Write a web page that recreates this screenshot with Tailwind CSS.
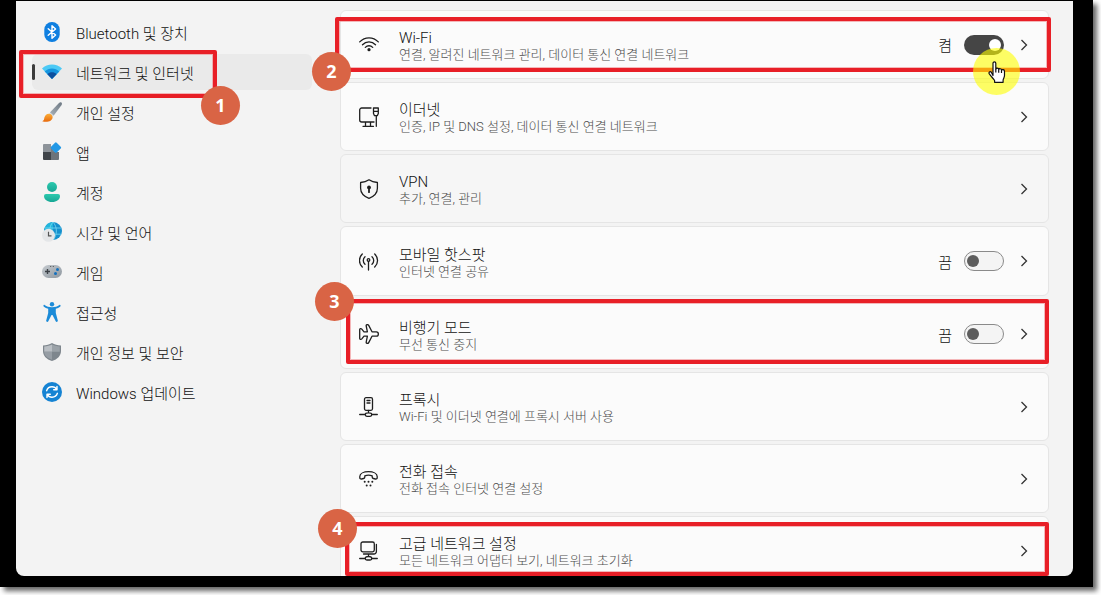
<!DOCTYPE html>
<html lang="ko">
<head>
    <meta charset="UTF-8">
    <title>네트워크 및 인터넷</title>
    <script src="https://cdn.jsdelivr.net/npm/@tailwindcss/browser@4"></script>
</head>
<body class="h-screen overflow-hidden bg-white pr-2 pb-2 font-['Roboto','Noto_Sans_CJK_KR',sans-serif] text-[15px] font-light text-[#111]">
    <div class="h-full bg-black pt-px pr-5 pb-[11px] pl-4 shadow-[4px_4px_5px_rgba(0,0,0,0.6)]">
        <div class="flex h-full overflow-hidden rounded-b-lg bg-[#f3f3f3]">

            <!-- Sidebar -->
            <nav class="flex w-[296px] shrink-0 flex-col gap-1 pt-[13px] pl-4">
                <a href="#" class="flex h-9 shrink-0 items-center gap-[14px] rounded-md pl-[10px]">
                    <svg class="size-5" viewBox="0 0 20 20" fill="none">
                        <rect x="2.3" y="0" width="15.4" height="20" rx="7.5" fill="#0f7fe0"/>
                        <path d="M6.2 6.800l7.400 6.200-3.600 3.200V3.800l3.600 3.200-7.400 6.200" stroke="#fff" stroke-width="1.4" stroke-linejoin="round" stroke-linecap="round"/>
                    </svg>
                    <span class="pt-1">Bluetooth 및 장치</span>
                </a>
                <div class="relative shrink-0">
                    <a href="#" aria-current="page" class="flex h-9 items-center rounded-md bg-[#eaeaea]">
                        <span class="h-4 w-[3px] rounded-full bg-[#3b3b3b]"></span>
                        <svg class="mr-[14px] ml-[7px] size-5" viewBox="0 0 20 20">
                            <path d="M0 6.600C5.400 1.200 14.600 1.200 20 6.600L10 17z" fill="#4cc9f5"/>
                            <path d="M2.700 9.500C6.700 5.400 13.300 5.400 17.300 9.500L10 17z" fill="#1594de"/>
                            <path d="M5.400 12.200C8 9.700 12 9.700 14.600 12.200L10 17z" fill="#0d4f9e"/>
                        </svg>
                        <span class="pt-1">네트워크 및 인터넷</span>
                    </a>
                    <div class="absolute -top-1 -left-[13px] h-12 w-[198px] rounded-xs border-4 border-[#e81f27] ring-1 ring-[#f08a8e]/60 ring-inset"></div>
                    <div class="absolute top-8 left-[169px] flex size-[39px] items-center justify-center rounded-full bg-[#d96445] pb-0.5 font-['Open_Sans',sans-serif] text-lg font-bold text-white">1</div>
                </div>
                <a href="#" class="flex h-9 shrink-0 items-center gap-[14px] rounded-md pl-[10px]">
                    <svg class="size-5" viewBox="0 0 20 20">
                        <defs>
                            <linearGradient id="brush" x1="1" y1="0" x2="0" y2="1"><stop stop-color="#6d7883"/><stop offset="1" stop-color="#a9b2ba"/></linearGradient>
                            <linearGradient id="paint" x1="0" y1="0" x2="0" y2="1"><stop stop-color="#fbb03b"/><stop offset="1" stop-color="#e8690b"/></linearGradient>
                        </defs>
                        <path d="M19.400.5c.9.8.6 1.900 0 2.800l-7.800 10.400-3.700-3.200L17 .9c.7-.7 1.700-1 2.400-.4z" fill="url(#brush)"/>
                        <path d="M8.100 10.600l3.500 3.100-1.200 1.200-3.400-3z" fill="#d5dbe0"/>
                        <path d="M6.800 11.700c1.900-.2 4 1.700 3.800 3.700-.3 3.400-5 5.300-10.400 3.800 2.100-.9 1.700-2.200 2.200-3.800.7-2.200 2.300-3.500 4.400-3.700z" fill="url(#paint)"/>
                    </svg>
                    <span class="pt-1">개인 설정</span>
                </a>
                <a href="#" class="flex h-9 shrink-0 items-center gap-[14px] rounded-md pl-[10px]">
                    <svg class="size-5" viewBox="0 0 20 20">
                        <path d="M2 2h7v8H1V3a1 1 0 011-1z" fill="#8d9399"/>
                        <path d="M1 10h8v8H2a1 1 0 01-1-1z" fill="#3f4449"/>
                        <path d="M9 10h8v7a1 1 0 01-1 1H9z" fill="#6d7379"/>
                        <path d="M9 5l4 5H9z" fill="#777d83"/>
                        <path d="M13 .8a1.200 1.200 0 011.700 0l4 4a1.200 1.200 0 010 1.700l-4 4a1.200 1.200 0 01-1.700 0l-4-4a1.200 1.200 0 010-1.700z" fill="#2298e6"/>
                    </svg>
                    <span class="pt-1">앱</span>
                </a>
                <a href="#" class="flex h-9 shrink-0 items-center gap-[14px] rounded-md pl-[10px]">
                    <svg class="size-5" viewBox="0 0 20 20">
                        <defs><linearGradient id="user" x1="0" y1="0" x2="0" y2="1"><stop stop-color="#2cc9ae"/><stop offset="1" stop-color="#17a795"/></linearGradient></defs>
                        <circle cx="10" cy="5" r="5" fill="url(#user)"/>
                        <path d="M4 12h12a2 2 0 012 2c0 3.600-3.400 6-8 6s-8-2.400-8-6a2 2 0 012-2z" fill="url(#user)"/>
                    </svg>
                    <span class="pt-1">계정</span>
                </a>
                <a href="#" class="flex h-9 shrink-0 items-center gap-[14px] rounded-md pl-[10px]">
                    <svg class="size-5" viewBox="0 0 20 20" fill="none">
                        <circle cx="11" cy="9" r="9" fill="#1590cd"/>
                        <path d="M3 5.500A9 9 0 0111 0v9H2.200z" fill="#22b6dc"/>
                        <path d="M2.800 6h16.400M2.800 12.200h16.400M11 0C6.500 5 6.500 13 11 18M11 0c4.500 5 4.500 13 0 18" stroke="#77d9f3" stroke-width=".8"/>
                        <circle cx="6.500" cy="13.300" r="6.500" fill="#e4e6e8"/>
                        <path d="M6.500 9.800v4h3" stroke="#555" stroke-width="1.200"/>
                    </svg>
                    <span class="pt-1">시간 및 언어</span>
                </a>
                <a href="#" class="flex h-9 shrink-0 items-center gap-[14px] rounded-md pl-[10px]">
                    <svg class="size-5" viewBox="0 0 20 20" fill="none">
                        <defs><linearGradient id="pad" x1="0" y1="0" x2="1" y2="1"><stop stop-color="#c5cacf"/><stop offset="1" stop-color="#8e979f"/></linearGradient></defs>
                        <rect x="0" y="3" width="20" height="13" rx="6.500" fill="url(#pad)"/>
                        <path d="M5.500 7v5M3 9.500h5" stroke="#3b4046" stroke-width="1.400"/>
                        <circle cx="15.500" cy="7.500" r="1.500" fill="#1470bd"/>
                        <circle cx="13.500" cy="11.500" r="1.500" fill="#1470bd"/>
                        <circle cx="8.700" cy="4.500" r=".6" fill="#444"/>
                        <circle cx="11.300" cy="4.500" r=".6" fill="#444"/>
                    </svg>
                    <span class="pt-1">게임</span>
                </a>
                <a href="#" class="flex h-9 shrink-0 items-center gap-[14px] rounded-md pl-[10px]">
                    <svg class="size-5" viewBox="0 0 20 20">
                        <circle cx="10" cy="2.200" r="2.200" fill="#1b8bd8"/>
                        <path d="M2.600 3c2 1.500 4.500 2.200 7.400 2.200S15.400 4.500 17.400 3c1-.6 1.700.9.700 1.700-1.200.9-2.700 1.600-4.300 2v4.200l2 7.700c.3 1.300-1.600 1.800-2.100.6L10.500 13h-1l-3.200 6.200c-.5 1.200-2.400.7-2.100-.6l2-7.700V6.700c-1.600-.4-3.100-1.100-4.300-2C.9 3.900 1.600 2.400 2.600 3z" fill="#1b8bd8"/>
                    </svg>
                    <span class="pt-1">접근성</span>
                </a>
                <a href="#" class="flex h-9 shrink-0 items-center gap-[14px] rounded-md pl-[10px]">
                    <svg class="size-5" viewBox="0 0 20 20">
                        <path d="M10 1c2.600 1.600 5.400 2.300 9 2.400V9c0 4.800-3.400 8.300-9 10-5.600-1.700-9-5.200-9-10V3.400C4.600 3.300 7.400 2.600 10 1z" fill="#7e868d"/>
                        <path d="M10 2.600v7.200H2.200V4.500C5.200 4.400 7.700 3.800 10 2.600z" fill="#b9bec3"/>
                        <path d="M10 2.600v7.200h7.800V4.500C14.800 4.400 12.300 3.800 10 2.600z" fill="#9ba2a8"/>
                        <path d="M10 9.800v7.900c-4.800-1.500-7.700-4-7.800-7.900z" fill="#969da4"/>
                    </svg>
                    <span class="pt-1">개인 정보 및 보안</span>
                </a>
                <a href="#" class="flex h-9 shrink-0 items-center gap-[14px] rounded-md pl-[10px]">
                    <svg class="size-5" viewBox="0 0 20 20" fill="none" stroke="#fff" stroke-width="1.400" stroke-linecap="round" stroke-linejoin="round">
                        <circle cx="10" cy="10" r="10" fill="#1583d3" stroke="none"/>
                        <path d="M4.600 8.700C5.500 6 7.500 4.800 10 4.800c2 0 3.700.9 4.700 2.600M15 4.500v3.300h-3.300M15.400 11.300c-.9 2.700-2.900 3.900-5.400 3.900-2 0-3.700-.9-4.700-2.600M5 15.500v-3.300h3.300"/>
                    </svg>
                    <span class="pt-1">Windows 업데이트</span>
                </a>
            </nav>

            <!-- Network list -->
            <main class="min-w-0 flex-1 pt-[9px] pr-6 pl-7">
                <ul class="flex flex-col gap-[3px]">
                    <li class="relative flex h-[69px] items-center rounded-md border border-[#e5e5e5] bg-[#fbfbfb] px-[18px]">
                        <svg class="mr-5 size-5" viewBox="0 0 20 20" fill="none" stroke="#1f1f1f" stroke-width="1.300" stroke-linecap="round">
                            <path d="M.7 6.900C5.800 1.500 14.200 1.500 19.300 6.900M3.500 9.700c3.600-3.900 9.400-3.900 13 0M6.300 12.400c2.100-2.200 5.300-2.200 7.400 0"/>
                            <circle cx="10" cy="14.700" r="1.600" fill="#1f1f1f" stroke="none"/>
                        </svg>
                        <div class="flex-1 pt-1">
                            <h2 class="leading-[17px]">Wi-Fi</h2>
                            <p class="text-[13px] leading-4 text-[#4d4d4d]">연결, 알려진 네트워크 관리, 데이터 통신 연결 네트워크</p>
                        </div>
                        <label for="wifi" class="mr-3 pt-1">켬</label>
                        <input id="wifi" type="checkbox" role="switch" checked class="flex h-5 w-10 appearance-none items-center justify-end rounded-full bg-[#454545] px-[3px] before:size-3 before:rounded-full before:bg-white before:content-['']">
                        <button type="button" aria-label="Wi-Fi 열기" class="ml-[14px]">
                            <svg class="size-3" viewBox="0 0 12 12" fill="none" stroke="#333" stroke-width="1.300"><path d="M3.500 1l5 5-5 5"/></svg>
                        </button>
                        <div class="absolute top-[6px] -right-[3px] -left-[6px] h-[55px] rounded-xs border-4 border-[#e81f27] ring-1 ring-[#f08a8e]/60 ring-inset"></div>
                        <div class="absolute top-[41px] -left-[29px] flex size-[39px] items-center justify-center rounded-full bg-[#d96445] pb-0.5 font-['Open_Sans',sans-serif] text-lg font-bold text-white">2</div>
                        <!-- Pointer with highlight -->
                        <div class="absolute top-[37px] right-[28px] z-10 flex size-[47px] items-center justify-center rounded-full bg-[#ffff00]/60">
                            <svg class="h-[22px] w-[18px]" viewBox="0 0 18 22" fill="#fff" stroke="#111" stroke-width="1.200" stroke-linejoin="round">
                                <path d="M5 14.500V2.200C5 .3 7.800.3 7.800 2.200V8c.3-1.200 2.600-1.200 2.900.4.500-1.100 2.600-.9 2.800.6.800-.9 3-.4 3 1.400v4.200c0 2-1.400 3-1.400 4.700v2H6.600v-1.800C5.500 17.700 3.500 16 1.300 12.900c-1-1.500.8-2.800 2-1.700z"/>
                                <path d="M7.800 8v3.500M10.700 8.400v3.300M13.500 9v3" fill="none"/>
                            </svg>
                        </div>
                    </li>

                    <li class="flex h-[69px] items-center rounded-md border border-[#e5e5e5] bg-[#fbfbfb] px-[18px]">
                        <svg class="mr-5 size-5" viewBox="0 0 20 20" fill="none" stroke="#1f1f1f" stroke-width="1.300" stroke-linecap="round" stroke-linejoin="round">
                            <path d="M12 1H2.700a2 2 0 00-2 2v10a2 2 0 002 2H15M6.500 15v4.300M11.500 15v4.300M4 19.300h10.500"/>
                            <path d="M15 1h4.300v5.500l-1 2.200H15.500l-1-2.200V1zM14.600 4.300h4.600M17.300 8.700v10.600"/>
                        </svg>
                        <div class="flex-1 pt-1">
                            <h2 class="leading-[17px]">이더넷</h2>
                            <p class="text-[13px] leading-4 text-[#4d4d4d]">인증, IP 및 DNS 설정, 데이터 통신 연결 네트워크</p>
                        </div>
                        <button type="button" aria-label="이더넷 열기">
                            <svg class="size-3" viewBox="0 0 12 12" fill="none" stroke="#333" stroke-width="1.300"><path d="M3.500 1l5 5-5 5"/></svg>
                        </button>
                    </li>

                    <li class="flex h-[69px] items-center rounded-md border border-[#e5e5e5] bg-[#f6f6f6] px-[18px]">
                        <svg class="mr-5 size-5" viewBox="0 0 20 20" fill="none" stroke="#1f1f1f" stroke-width="1.300" stroke-linejoin="round">
                            <path d="M10 .8c2.400 1.700 5 2.500 8.400 2.700v5.700c0 4.800-3 8-8.400 10.100-5.400-2.100-8.400-5.300-8.400-10.100V3.500C5 3.300 7.600 2.500 10 .8z"/>
                            <circle cx="10" cy="8.400" r="1.900" fill="#1f1f1f" stroke="none"/>
                            <path d="M10 9v4.200" stroke-width="1.800" stroke-linecap="round"/>
                        </svg>
                        <div class="flex-1 pt-1">
                            <h2 class="leading-[17px]">VPN</h2>
                            <p class="text-[13px] leading-4 text-[#4d4d4d]">추가, 연결, 관리</p>
                        </div>
                        <button type="button" aria-label="VPN 열기">
                            <svg class="size-3" viewBox="0 0 12 12" fill="none" stroke="#333" stroke-width="1.300"><path d="M3.500 1l5 5-5 5"/></svg>
                        </button>
                    </li>

                    <li class="flex h-[70px] items-center rounded-md border border-[#e5e5e5] bg-[#fbfbfb] px-[18px]">
                        <svg class="mr-5 size-5" viewBox="0 0 20 20" fill="none" stroke="#1f1f1f" stroke-width="1.300" stroke-linecap="round">
                            <path d="M3.300 3C-.5 6.600-.5 12.400 3.300 16M15.700 3c3.800 3.600 3.800 9.400 0 13M6 5.700c-2.300 2-2.300 5.600 0 7.600M13 5.700c2.300 2 2.300 5.600 0 7.600M9.500 10.500V19"/>
                            <circle cx="9.500" cy="9" r="1.300"/>
                        </svg>
                        <div class="flex-1 pt-1">
                            <h2 class="leading-[17px]">모바일 핫스팟</h2>
                            <p class="text-[13px] leading-4 text-[#4d4d4d]">인터넷 연결 공유</p>
                        </div>
                        <label for="hotspot" class="mr-3 pt-1">끔</label>
                        <input id="hotspot" type="checkbox" role="switch" class="flex h-5 w-10 appearance-none items-center rounded-full border border-[#8a8a8a] bg-[#f4f4f4] px-[2px] before:size-3 before:rounded-full before:bg-[#5d5d5d] before:content-['']">
                        <button type="button" aria-label="모바일 핫스팟 열기" class="ml-[14px]">
                            <svg class="size-3" viewBox="0 0 12 12" fill="none" stroke="#333" stroke-width="1.300"><path d="M3.500 1l5 5-5 5"/></svg>
                        </button>
                    </li>

                    <li class="relative flex h-[70px] items-center rounded-md border border-[#e5e5e5] bg-[#fbfbfb] px-[18px]">
                        <svg class="mr-5 size-5" viewBox="0 0 20 20" fill="none" stroke="#1f1f1f" stroke-width="1.300" stroke-linejoin="round">
                            <path d="M7.200 2c-.3-1.600 1.800-1.900 2.500-.6L13 7.800h4.400c2.600 0 2.600 4.400 0 4.400H13l-3.300 6.400c-.7 1.300-2.800 1-2.500-.6l1.200-5.800H5l-2.200 2.700c-.7.800-2.100.6-2.100-.5V5.600c0-1.100 1.400-1.300 2.100-.5L5 7.800h3.400z"/>
                        </svg>
                        <div class="flex-1 pt-1">
                            <h2 class="leading-[17px]">비행기 모드</h2>
                            <p class="text-[13px] leading-4 text-[#4d4d4d]">무선 통신 중지</p>
                        </div>
                        <label for="airplane" class="mr-3 pt-1">끔</label>
                        <input id="airplane" type="checkbox" role="switch" class="flex h-5 w-10 appearance-none items-center rounded-full border border-[#8a8a8a] bg-[#f4f4f4] px-[2px] before:size-3 before:rounded-full before:bg-[#5d5d5d] before:content-['']">
                        <button type="button" aria-label="비행기 모드 열기" class="ml-[14px]">
                            <svg class="size-3" viewBox="0 0 12 12" fill="none" stroke="#333" stroke-width="1.300"><path d="M3.500 1l5 5-5 5"/></svg>
                        </button>
                        <div class="absolute -top-px -right-px left-[5px] h-[65px] rounded-xs border-4 border-[#e81f27] ring-1 ring-[#f08a8e]/60 ring-inset"></div>
                        <div class="absolute -top-[18px] -left-[26px] flex size-[39px] items-center justify-center rounded-full bg-[#d96445] pb-0.5 font-['Open_Sans',sans-serif] text-lg font-bold text-white">3</div>
                    </li>

                    <li class="flex h-[69px] items-center rounded-md border border-[#e5e5e5] bg-[#fbfbfb] px-[18px]">
                        <svg class="mr-5 size-5" viewBox="0 0 20 20" fill="none" stroke="#1f1f1f" stroke-width="1.300" stroke-linecap="round" stroke-linejoin="round">
                            <rect x="5.500" y=".7" width="8" height="12.600" rx="1.500"/>
                            <path d="M8 3.500h3M8 6h3M9.500 13.300v2.500M.7 17.500h5.500M12.800 17.500h5.500M6.200 17.500c0-1 1.300-1.700 3.300-1.700s3.300.7 3.300 1.700-.8 1.800-1.700 1.800H7.900c-.9 0-1.700-.8-1.700-1.800z"/>
                        </svg>
                        <div class="flex-1 pt-1">
                            <h2 class="leading-[17px]">프록시</h2>
                            <p class="text-[13px] leading-4 text-[#4d4d4d]">Wi-Fi 및 이더넷 연결에 프록시 서버 사용</p>
                        </div>
                        <button type="button" aria-label="프록시 열기">
                            <svg class="size-3" viewBox="0 0 12 12" fill="none" stroke="#333" stroke-width="1.300"><path d="M3.500 1l5 5-5 5"/></svg>
                        </button>
                    </li>

                    <li class="flex h-[69px] items-center rounded-md border border-[#e5e5e5] bg-[#fbfbfb] px-[18px]">
                        <svg class="mr-5 size-5" viewBox="0 0 20 20" fill="none" stroke="#1f1f1f" stroke-width="1.300" stroke-linejoin="round">
                            <path d="M.8 7.600C.8 4.500 4.800 2.700 9.500 2.700s8.700 1.800 8.700 4.900v1.100c0 .9-.8 1.500-1.700 1.300l-2.100-.5c-.8-.2-1.200-.7-1.200-1.500V6.900c-2-.9-5.400-.9-7.400 0V8c0 .8-.4 1.300-1.200 1.500l-2.100.5C1.600 10.200.8 9.600.8 8.700z"/>
                            <g fill="#1f1f1f" stroke="none"><circle cx="5.700" cy="12.800" r="1"/><circle cx="9.500" cy="12.800" r="1"/><circle cx="13.300" cy="12.800" r="1"/><circle cx="7.700" cy="16.500" r="1"/><circle cx="11.500" cy="16.500" r="1"/></g>
                        </svg>
                        <div class="flex-1 pt-1">
                            <h2 class="leading-[17px]">전화 접속</h2>
                            <p class="text-[13px] leading-4 text-[#4d4d4d]">전화 접속 인터넷 연결 설정</p>
                        </div>
                        <button type="button" aria-label="전화 접속 열기">
                            <svg class="size-3" viewBox="0 0 12 12" fill="none" stroke="#333" stroke-width="1.300"><path d="M3.500 1l5 5-5 5"/></svg>
                        </button>
                    </li>

                    <li class="relative flex h-[69px] items-center rounded-md border border-[#e5e5e5] bg-[#fbfbfb] px-[18px]">
                        <svg class="mr-5 size-5" viewBox="0 0 20 20" fill="none" stroke="#1f1f1f" stroke-width="1.300" stroke-linecap="round" stroke-linejoin="round">
                            <rect x="2" y="1" width="13.300" height="9.800" rx="1.800"/>
                            <path d="M17.400 3.500v7a2.500 2.500 0 01-2.500 2.500H4.500M9.500 13v2.500M.7 17.500h5.500M12.800 17.500h5.500M6.200 17.500c0-1 1.300-2 3.300-2s3.300 1 3.300 2-.8 1.500-1.700 1.500H7.900c-.9 0-1.700-.5-1.700-1.500z"/>
                        </svg>
                        <div class="flex-1 pt-1">
                            <h2 class="leading-[17px]">고급 네트워크 설정</h2>
                            <p class="text-[13px] leading-4 text-[#4d4d4d]">모든 네트워크 어댑터 보기, 네트워크 초기화</p>
                        </div>
                        <button type="button" aria-label="고급 네트워크 설정 열기">
                            <svg class="size-3" viewBox="0 0 12 12" fill="none" stroke="#333" stroke-width="1.300"><path d="M3.500 1l5 5-5 5"/></svg>
                        </button>
                        <div class="absolute top-[5px] -right-px left-1 h-[54px] rounded-xs border-4 border-[#e81f27] ring-1 ring-[#f08a8e]/60 ring-inset"></div>
                        <div class="absolute -top-[8px] -left-[23px] flex size-[39px] items-center justify-center rounded-full bg-[#d96445] pb-0.5 font-['Open_Sans',sans-serif] text-lg font-bold text-white">4</div>
                    </li>
                </ul>
            </main>
        </div>
    </div>
</body>
</html>
